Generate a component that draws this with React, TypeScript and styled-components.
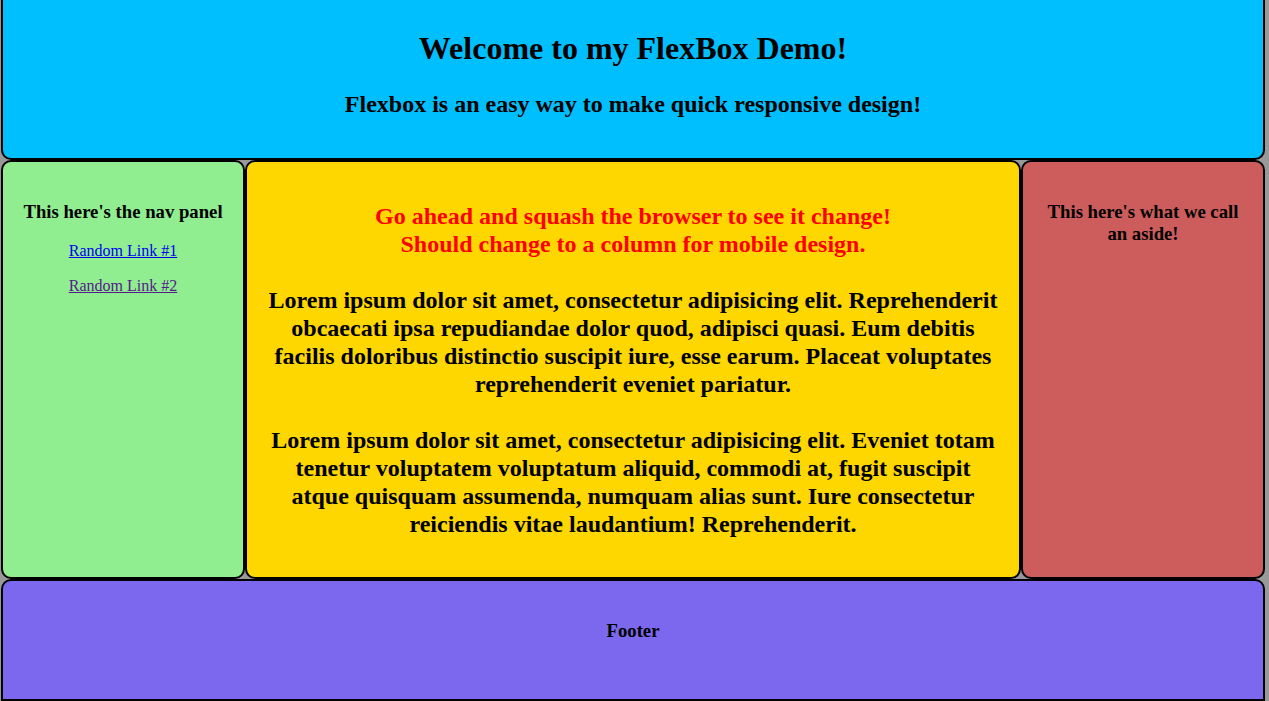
import React from "react";
import styled, { createGlobalStyle } from "styled-components";

const GlobalStyle = createGlobalStyle`
  html, body {
    margin: 0;
    padding: 0;
    background: #999999;
    font-family: "Liberation Serif", "Times New Roman", serif;
    overflow: hidden;
  }
`;

const Page = styled.div`
  display: grid;
  grid-template-columns: 244px 776px 244px;
  grid-template-rows: 160px 419px 122px;
  width: 1264px;
  margin-left: 1px;
  text-align: center;
  color: #000;
`;

const Panel = styled.div<{ $bg: string }>`
  box-sizing: border-box;
  background: ${(p) => p.$bg};
  border: 2px solid #000;
  border-radius: 10px;
  padding: 0 20px;
`;

const Header = styled(Panel)`
  grid-column: 1 / -1;
  border-top: none;
  border-radius: 0 0 10px 10px;
  padding-top: 30px;
`;

const Title = styled.h1`
  margin: 0 0 23px;
  font-size: 32px;
  line-height: 37px;
  font-weight: bold;
`;

const Subtitle = styled.h2`
  margin: 0;
  font-size: 24px;
  line-height: 28px;
  font-weight: bold;
`;

const Nav = styled(Panel)`
  display: flex;
  flex-direction: column;
  align-items: center;
  padding: 39px 14px 0;
`;

const PanelHeading = styled.h3`
  margin: 0;
  font-size: 18.72px;
  line-height: 21.5px;
  font-weight: bold;
`;

const NavLinks = styled.div`
  display: flex;
  flex-direction: column;
  align-items: center;
  gap: 17px;
  margin-top: 19px;
`;

const NavLink = styled.a<{ $visited?: boolean }>`
  font-size: 16px;
  line-height: 18.5px;
  color: ${(p) => (p.$visited ? "#551a8b" : "#0000ee")};
  text-decoration: underline;
`;

const Main = styled(Panel)`
  padding: 40px 20px 0;
`;

const MainBlock = styled.h2<{ $red?: boolean }>`
  margin: 0 0 28px;
  font-size: 24px;
  line-height: 28px;
  font-weight: bold;
  color: ${(p) => (p.$red ? "#ff0000" : "#000")};
`;

const Aside = styled(Panel)`
  padding: 39px 20px 0;
`;

const Footer = styled(Panel)`
  grid-column: 1 / -1;
  border-radius: 10px 10px 0 0;
  padding-top: 39px;
`;

export default function App() {
  return (
    <>
      <GlobalStyle />
      <Page>
        <Header $bg="#00bfff">
          <Title>Welcome to my FlexBox Demo!</Title>
          <Subtitle>Flexbox is an easy way to make quick responsive design!</Subtitle>
        </Header>
        <Nav $bg="#90ee90">
          <PanelHeading>This here's the nav panel</PanelHeading>
          <NavLinks>
            <NavLink href="#">Random Link #1</NavLink>
            <NavLink href="#" $visited>
              Random Link #2
            </NavLink>
          </NavLinks>
        </Nav>
        <Main $bg="#ffd700">
          <MainBlock $red>
            Go ahead and squash the browser to see it change!
            <br />
            Should change to a column for mobile design.
          </MainBlock>
          <MainBlock>
            Lorem ipsum dolor sit amet, consectetur adipisicing elit. Reprehenderit obcaecati ipsa
            repudiandae dolor quod, adipisci quasi. Eum debitis facilis doloribus distinctio suscipit
            iure, esse earum. Placeat voluptates reprehenderit eveniet pariatur.
          </MainBlock>
          <MainBlock>
            Lorem ipsum dolor sit amet, consectetur adipisicing elit. Eveniet totam tenetur voluptatem
            voluptatum aliquid, commodi at, fugit suscipit atque quisquam assumenda, numquam alias
            sunt. Iure consectetur reiciendis vitae laudantium! Reprehenderit.
          </MainBlock>
        </Main>
        <Aside $bg="#cd5c5c">
          <PanelHeading>This here's what we call an aside!</PanelHeading>
        </Aside>
        <Footer $bg="#7b68ee">
          <PanelHeading>Footer</PanelHeading>
        </Footer>
      </Page>
    </>
  );
}
